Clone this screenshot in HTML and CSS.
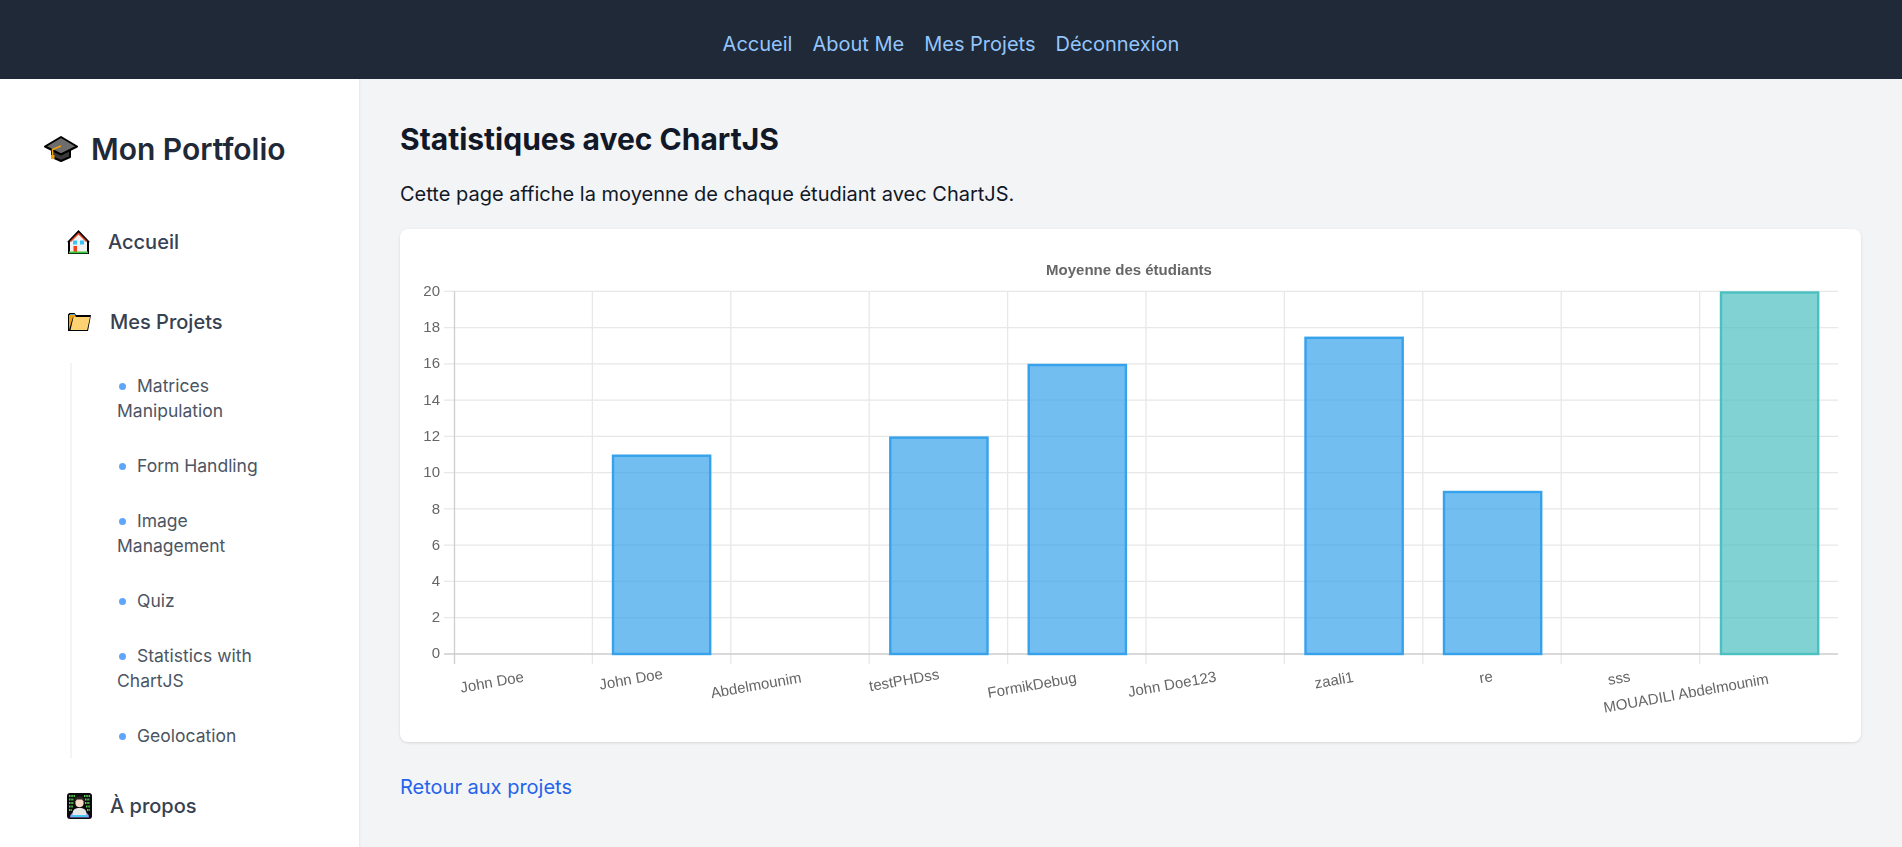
FILE: index.html
```html
<!DOCTYPE html>
<html lang="fr">
<head>
<meta charset="utf-8">
<title>Statistiques avec ChartJS</title>
<link rel="stylesheet" href="styles.css">
</head>
<body>
<header class="topbar">
  <a href="#">Accueil</a>
  <a href="#">About Me</a>
  <a href="#">Mes Projets</a>
  <a href="#">Déconnexion</a>
</header>
<div class="layout">
  <aside class="sidebar">
    <div class="brand">
      <svg class="brand-icon" viewBox="0 0 34 26">
        <path d="M8 12v9l9 4 9-4v-9z" fill="#3a3a3a" stroke="#000" stroke-width="2" stroke-linejoin="round"/>
        <path d="M1 10.500 17 1l16 9.500-16 8z" fill="#6d6d6d" stroke="#000" stroke-width="2" stroke-linejoin="round"/>
        <path d="M17 10l-8.500 3.500v6" fill="none" stroke="#f0a30a" stroke-width="1.500"/>
        <rect x="7" y="19" width="3.500" height="4" fill="#f0a30a"/>
      </svg>
      <span>Mon Portfolio</span>
    </div>
    <ul class="nav">
      <li class="nav-item nav-home">
        <svg class="icon-home" viewBox="0 0 23 25">
          <path d="M1 24v-12h21v12z" fill="#000"/>
          <path d="M3 23V11L11.500 3 20 11v12z" fill="#f2f2f2"/>
          <path d="M1 12.500 11.500 1.500 22 12.500" fill="none" stroke="#000" stroke-width="2"/>
          <path d="M3.500 11.500 11.500 3.500 19.500 11.500" fill="none" stroke="#e8431f" stroke-width="1.500"/>
          <rect x="6" y="10.500" width="4" height="4" fill="#36c5f5"/>
          <rect x="13" y="10.500" width="4" height="4" fill="#36c5f5"/>
          <rect x="6.500" y="16" width="3.500" height="7" fill="#f2401f"/>
          <rect x="2" y="21.500" width="19" height="1.800" fill="#3cc83c"/>
        </svg>
        <span>Accueil</span>
      </li>
      <li class="nav-item nav-projects">
        <svg class="icon-folder" viewBox="0 0 25 20">
          <path d="M1 19V2.500L2.500 1h5L9 3h15l-3 16z" fill="#000"/>
          <path d="M2 18V3h6l1 2h-3z" fill="#eb9f12"/>
          <path d="M3 2h5v1H3z" fill="#4aa3c8"/>
          <path d="M6.500 5H23l-2.800 13H3.500z" fill="#fdd273"/>
        </svg>
        <span>Mes Projets</span>
      </li>
      <li>
        <ul class="subnav">
          <li>Matrices Manipulation</li>
          <li>Form Handling</li>
          <li>Image Management</li>
          <li>Quiz</li>
          <li>Statistics with ChartJS</li>
          <li>Geolocation</li>
        </ul>
      </li>
      <li class="nav-item nav-about">
        <svg class="icon-dev" viewBox="0 0 25 26">
          <rect width="25" height="26" rx="3" fill="#0b0b0b"/>
          <path d="M2 3h6M17 3h6M2 6.500h5M18 6.500h5M2 10h5M18 10h5M2 13.500h4M19 13.500h4M2 17h3M20 17h3" stroke="#58c958" stroke-width="1.800" stroke-dasharray="1.500 .8"/>
          <path d="M7.500 10.500V6l2-2.500h6L17.500 6v4.500z" fill="#2a2320"/>
          <path d="M8.500 8.500 10 6.500h5l1.500 2v2.500c0 2-2 3.200-4 3.200s-4-1.200-4-3.200z" fill="#f8dcc8"/>
          <path d="M3 23.500c.5-2 1.500-3.500 3-3.500h13c1.500 0 2.500 1.500 3 3.500v1H3z" fill="#9b7cf0"/>
          <path d="M5.500 21c0-4.500 3-6 7-6s7 1.500 7 6v1.500h-14z" fill="#e6e6e6"/>
          <rect x="4" y="22" width="17" height="2" rx=".8" fill="#47c6f2"/>
        </svg>
        <span>À propos</span>
      </li>
    </ul>
  </aside>
  <main class="content">
    <h1>Statistiques avec ChartJS</h1>
    <p class="lead">Cette page affiche la moyenne de chaque étudiant avec ChartJS.</p>
    <section class="card">
      <svg class="chart" viewBox="0 0 1461 513" width="1461" height="513">
        <g class="grid">
          <path d="M44 62.300H1438M44 98.600H1438M44 134.800H1438M44 171.100H1438M44 207.400H1438M44 243.600H1438M44 279.900H1438M44 316.100H1438M44 352.400H1438M44 388.700H1438"/>
          <path d="M192.400 62.300V435M330.800 62.300V435M469.200 62.300V435M607.600 62.300V435M746 62.300V435M884.400 62.300V435M1022.800 62.300V435M1161.200 62.300V435M1299.600 62.300V435"/>
        </g>
        <g class="axis">
          <path d="M54.500 62.300V435M44 425H1438"/>
        </g>
        <g class="bar-blue">
          <rect x="213" y="226.700" width="97.200" height="198.300"/>
          <rect x="490.300" y="208.600" width="97.200" height="216.400"/>
          <rect x="628.700" y="136" width="97.200" height="289"/>
          <rect x="905.500" y="108.800" width="97.200" height="316.200"/>
          <rect x="1044" y="263" width="97.200" height="162"/>
        </g>
        <rect class="bar-teal" x="1321" y="63.500" width="97.200" height="361.500"/>
        <text class="chart-title" x="729" y="46">Moyenne des étudiants</text>
        <g class="y-labels">
          <text x="40" y="67">20</text><text x="40" y="103">18</text><text x="40" y="139">16</text><text x="40" y="176">14</text><text x="40" y="212">12</text><text x="40" y="248">10</text><text x="40" y="285">8</text><text x="40" y="321">6</text><text x="40" y="357">4</text><text x="40" y="393">2</text><text x="40" y="429">0</text>
        </g>
        <g class="x-labels">
          <text dy=".35em" transform="translate(92 453) rotate(-10)">John Doe</text>
          <text dy=".35em" transform="translate(231 450) rotate(-10)">John Doe</text>
          <text dy=".35em" transform="translate(356 456) rotate(-10)">Abdelmounim</text>
          <text dy=".35em" transform="translate(504 451) rotate(-10)">testPHDss</text>
          <text dy=".35em" transform="translate(632 456) rotate(-10)">FormikDebug</text>
          <text dy=".35em" transform="translate(772 455) rotate(-10)">John Doe123</text>
          <text dy=".35em" transform="translate(934 451) rotate(-10)">zaali1</text>
          <text dy=".35em" transform="translate(1086 448) rotate(-10)">re</text>
          <text dy=".35em" transform="translate(1219 449) rotate(-10)">sss</text>
          <text dy=".35em" transform="translate(1286 464) rotate(-10)">MOUADILI Abdelmounim</text>
        </g>
      </svg>
    </section>
    <a class="back" href="#">Retour aux projets</a>
  </main>
</div>
</body>
</html>
```

FILE: styles.css
```css
* { box-sizing: border-box; }
html, body { margin: 0; height: 100%; }
body {
  display: flex;
  flex-direction: column;
  font-family: Inter, "Noto Sans", sans-serif;
  background: #f3f4f6;
  color: #111827;
  overflow: hidden;
}
.topbar {
  flex: none;
  height: 79px;
  background: #1f2937;
  display: flex;
  align-items: center;
  justify-content: center;
  gap: 20px;
  padding-top: 8px;
  font-size: 20px;
}
.topbar a { color: #93c5fd; text-decoration: none; }
.layout { display: flex; flex: 1; min-height: 0; }
.sidebar {
  width: 359px;
  flex: none;
  background: #fff;
  box-shadow: 1px 0 2px rgba(0,0,0,.06);
  padding: 47px 0 0 44px;
}
.brand {
  display: flex;
  align-items: center;
  gap: 13px;
  font-size: 30px;
  font-weight: 600;
  color: #1f2937;
  height: 46px;
}
.brand-icon { width: 34px; height: 26px; }
.nav, .subnav { list-style: none; margin: 0; padding: 0; }
.nav-item {
  display: flex;
  align-items: center;
  font-size: 20px;
  font-weight: 500;
  color: #374151;
  margin-left: 23px;
}
.nav-home { margin-top: 55px; gap: 18px; height: 30px; }
.nav-projects { margin-top: 50px; gap: 18px; height: 30px; }
.nav-about { margin-top: 33px; gap: 18px; height: 30px; }
.icon-home { width: 23px; height: 25px; }
.icon-folder { width: 25px; height: 20px; }
.icon-dev { width: 25px; height: 26px; }
.subnav {
  margin: 26px 0 0 26px;
  border-left: 2px solid #f3f4f6;
  padding: 10px 60px 0 45px;
  height: 395px;
  font-size: 17.500px;
  line-height: 25px;
  color: #4b5563;
}
.subnav li + li { margin-top: 30px; }
.subnav li::before {
  content: "";
  display: inline-block;
  width: 7px;
  height: 7px;
  border-radius: 50%;
  background: #60a5fa;
  margin: 0 11px 2px 2px;
  vertical-align: middle;
}
.content { flex: 1; padding: 40px 41px 0; }
h1 { margin: 0; font-size: 30px; font-weight: 700; color: #111827; line-height: 40px; }
.lead { margin: 20px 0 0; font-size: 20px; line-height: 30px; color: #111827; }
.card {
  margin-top: 20px;
  height: 513px;
  background: #fff;
  border-radius: 8px;
  box-shadow: 0 1px 3px rgba(0,0,0,.12);
}
.chart { display: block; filter: blur(.3px); }
.grid path { fill: none; stroke: #e8e8e8; stroke-width: 1.300; }
.axis path { fill: none; stroke: #cdcdcd; stroke-width: 1.300; }
.bar-blue rect { fill: rgba(54,162,235,.7); stroke: #36a2eb; stroke-width: 2.400; }
.bar-teal { fill: rgba(75,192,192,.7); stroke: #4bc0c0; stroke-width: 2.400; }
.chart text { font-family: "Liberation Sans", Arial, sans-serif; fill: #666; font-size: 15px; }
.chart .chart-title { font-weight: 700; text-anchor: middle; }
.y-labels text { text-anchor: end; }
.x-labels text { text-anchor: middle; }
.back {
  display: inline-block;
  margin-top: 30px;
  font-size: 20px;
  line-height: 30px;
  color: #2563eb;
  text-decoration: none;
}
```
